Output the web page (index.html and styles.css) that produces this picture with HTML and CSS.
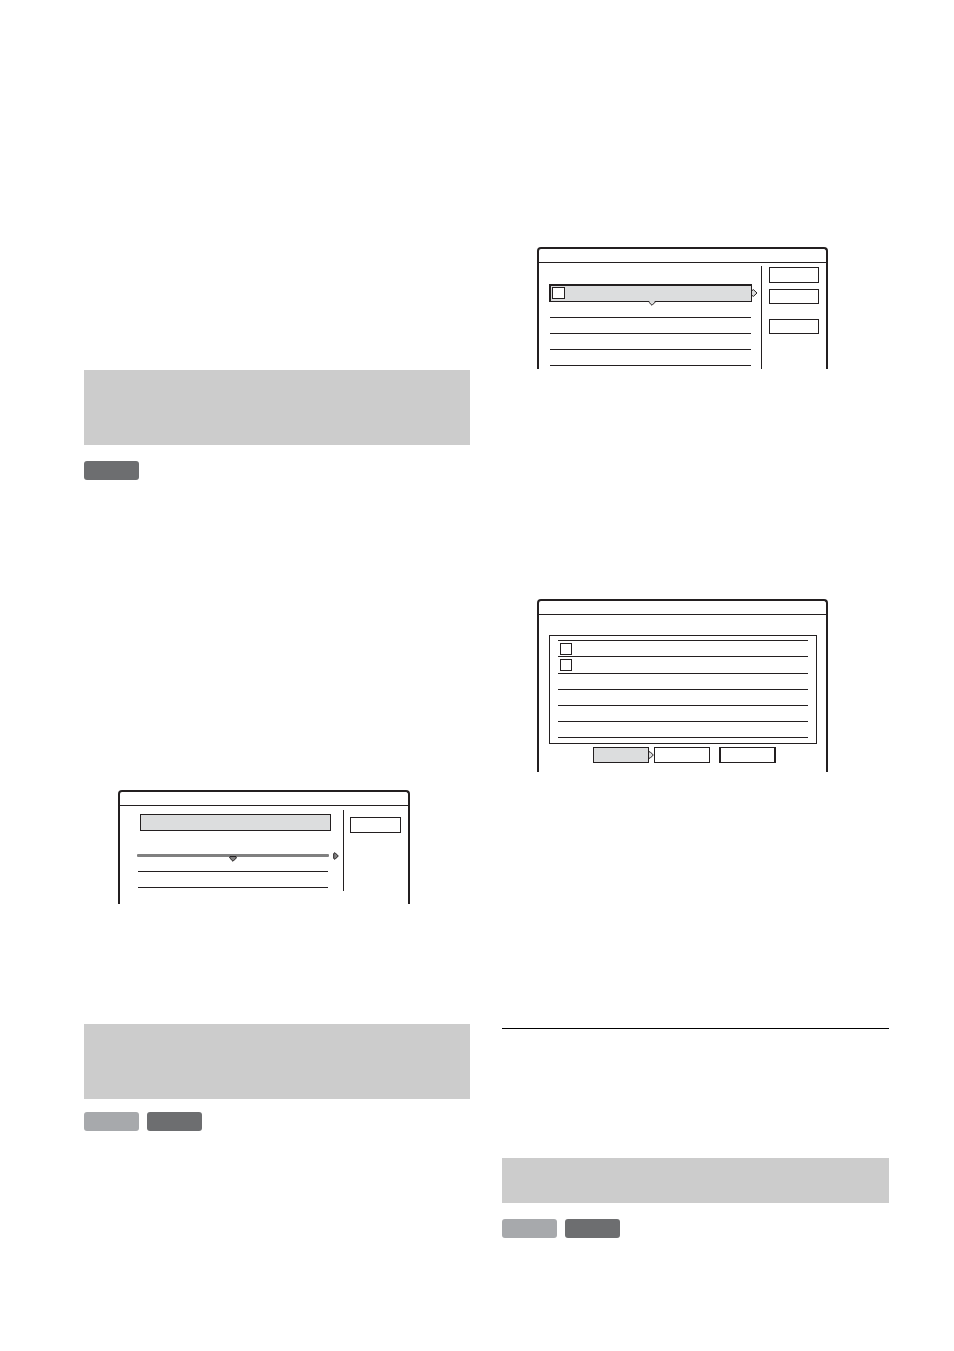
FILE: index.html
```
<!DOCTYPE html>
<html lang="en">
<head>
    <meta charset="UTF-8">
    <meta name="viewport" content="width=device-width, initial-scale=1.0">
    <title>Document</title>
    <link rel="stylesheet" href="styles.css">
</head>
<body>
    <main class="page">
        <div class="column column-left">
            <div class="heading"></div>
            <div class="badges">
                <span class="badge dark"></span>
            </div>

            <div class="screen screen-name">
                <div class="titlebar"></div>
                <div class="content">
                    <div class="list">
                        <div class="field"></div>
                        <div class="slider">
                            <svg class="arrow-down" width="8" height="6" viewBox="0 0 8 6"><path d="M1 0.5H7L7.3 2L4 5.3L0.7 2Z" fill="#808080" stroke="#231f20"/></svg>
                            <svg class="arrow-right" width="6" height="8" viewBox="0 0 6 8"><path d="M0.7 1.5L2 0.7L5.3 4L2 7.3L0.7 6.5Z" fill="#808080" stroke="#231f20"/></svg>
                        </div>
                        <div class="line"></div>
                        <div class="line"></div>
                    </div>
                    <div class="side">
                        <button type="button" class="btn" aria-label="Close"></button>
                    </div>
                </div>
            </div>

            <div class="heading"></div>
            <div class="badges">
                <span class="badge"></span>
                <span class="badge dark"></span>
            </div>
        </div>

        <div class="column column-right">
            <div class="screen screen-titles">
                <div class="titlebar"></div>
                <div class="content">
                    <div class="list">
                        <div class="selected">
                            <input type="checkbox" class="check" aria-label="Select title">
                            <svg class="arrow-down" width="8" height="6" viewBox="0 0 8 6"><path d="M1 0H7V2L4 5L1 2Z" fill="#dcddde"/><path d="M1 1L0.7 2L4 5.3L7.3 2L7 1" fill="none" stroke="#231f20"/></svg>
                            <svg class="arrow-right" width="6" height="8" viewBox="0 0 6 8"><path d="M0 1.5L1.5 0.7L5 4L1.5 7.3L0 6.5" fill="#dcddde" stroke="#231f20"/></svg>
                        </div>
                        <div class="line"></div>
                        <div class="line"></div>
                        <div class="line"></div>
                        <div class="line"></div>
                    </div>
                    <div class="side">
                        <button type="button" class="btn" aria-label="OK"></button>
                        <button type="button" class="btn" aria-label="Reset"></button>
                        <button type="button" class="btn last" aria-label="Close"></button>
                    </div>
                </div>
            </div>

            <div class="screen screen-confirm">
                <div class="titlebar"></div>
                <div class="box">
                    <div class="line"><input type="checkbox" class="check" aria-label="First title"></div>
                    <div class="line"><input type="checkbox" class="check" aria-label="Second title"></div>
                    <div class="line"></div>
                    <div class="line"></div>
                    <div class="line"></div>
                    <div class="line"></div>
                </div>
                <div class="actions">
                    <span class="active">
                        <button type="button" class="btn" aria-label="OK"></button>
                        <svg class="arrow-right" width="5" height="8" viewBox="0 0 5 8"><path d="M0 1L1 0.7L4.3 4L1 7.3L0 7" fill="#dcddde" stroke="#231f20"/></svg>
                    </span>
                    <button type="button" class="btn" aria-label="Change"></button>
                    <button type="button" class="btn cancel" aria-label="Cancel"></button>
                </div>
            </div>

            <hr class="rule">
            <div class="heading small"></div>
            <div class="badges">
                <span class="badge"></span>
                <span class="badge dark"></span>
            </div>
        </div>
    </main>
</body>
</html>
```
FILE: styles.css
```
* {
    box-sizing: border-box;
}

body {
    margin: 0;
    background: #fff;
    font-family: "Liberation Sans", sans-serif;
}

.page {
    display: grid;
    grid-template-columns: 386fr 387fr;
    gap: 32px;
    padding: 0 65px 114px 84px;
}

.column {
    display: flex;
    flex-direction: column;
}

.column-left {
    padding-top: 370px;
}

.column-right {
    padding-top: 247px;
}

.heading {
    min-height: 75px;
    background: #ccc;
}

.heading.small {
    min-height: 45px;
}

.badges {
    display: flex;
    gap: 8px;
    margin-top: 16px;
}

.badge {
    width: 55px;
    height: 19px;
    border-radius: 3px;
    background: #a7a9ac;
}

.badge.dark {
    background: #6d6e70;
}

.column-left .heading ~ .heading + .badges {
    margin-top: 13px;
}

/* menu screens, open at the bottom */
.screen {
    margin: 0 61px 0 35px;
    border: 2px solid #231f20;
    border-bottom: 0;
    border-radius: 4px 4px 0 0;
}

.screen-name {
    margin: 310px 60px 120px 34px;
    padding-bottom: 13px;
}

.screen-confirm {
    margin-top: 230px;
    margin-bottom: 256px;
    padding-bottom: 9px;
}

.titlebar {
    height: 14px;
    border-bottom: 1px solid #231f20;
}

.content {
    display: flex;
}

.list {
    flex: 1;
    padding: 21px 9px 3px 10px;
}

.line {
    height: 16px;
    margin: 0 1px;
    border-bottom: 1px solid #231f20;
}

.side {
    display: flex;
    flex-direction: column;
    width: 65px;
    margin-top: 3px;
    padding: 1px 7px 0;
    border-left: 1px solid #231f20;
}

.btn {
    height: 16px;
    padding: 0;
    border: 1px solid #231f20;
    border-radius: 0;
    background: #fff;
}

.btn + .btn {
    height: 15px;
    margin-top: 6px;
}

.btn + .btn.last {
    margin-top: 15px;
}

.check {
    appearance: none;
    display: block;
    width: 12px;
    height: 12px;
    margin: 0;
    border: 1px solid #231f20;
    background: #fff;
}

.arrow-down,
.arrow-right {
    position: absolute;
}

.selected {
    position: relative;
    height: 18px;
    padding: 1px;
    border: 1px solid #231f20;
    border-width: 2px 1px 1px 2px;
    background: #dcddde;
}

.selected .check {
    width: 13px;
}

.selected .arrow-down {
    top: 14px;
    left: 97px;
}

.selected .arrow-right {
    top: 3px;
    left: calc(100% + 1px);
}

/* name list */
.screen-name .list {
    padding: 8px 14px 3px 17px;
}

.screen-name .side {
    margin-top: 4px;
    padding: 7px 7px 0 6px;
}

.field {
    height: 17px;
    margin: 0 -2px 23px 3px;
    border: 1px solid #231f20;
    background: #dcddde;
}

.slider {
    position: relative;
    height: 3px;
    margin-bottom: -1px;
    border-radius: 1px;
    background: #808080;
}

.slider .arrow-down {
    top: 2px;
    left: 92px;
}

.slider .arrow-right {
    top: -2px;
    left: calc(100% + 4px);
}

/* confirmation */
.box {
    margin: 20px 9px 3px 10px;
    padding: 4px 7px 5px;
    border: 1px solid #231f20;
}

.box .line {
    padding: 2px 0 0 2px;
}

.box .line:first-child {
    height: 17px;
    border-top: 1px solid #231f20;
}

.box .line:nth-child(2) {
    height: 17px;
}

.actions {
    display: flex;
    padding-left: 54px;
}

.actions .btn {
    width: 56px;
    height: 16px;
    margin: 0;
}

.active {
    position: relative;
    display: flex;
    margin-right: 5px;
}

.active .btn {
    background: #dcddde;
}

.active .arrow-right {
    top: 4px;
    left: 100%;
}

.actions .btn.cancel {
    width: 57px;
    margin-left: 9px;
    border-width: 1px 2px;
}

.rule {
    width: 100%;
    height: 1px;
    margin: 0 0 129px;
    border: 0;
    background: #000;
}
```
